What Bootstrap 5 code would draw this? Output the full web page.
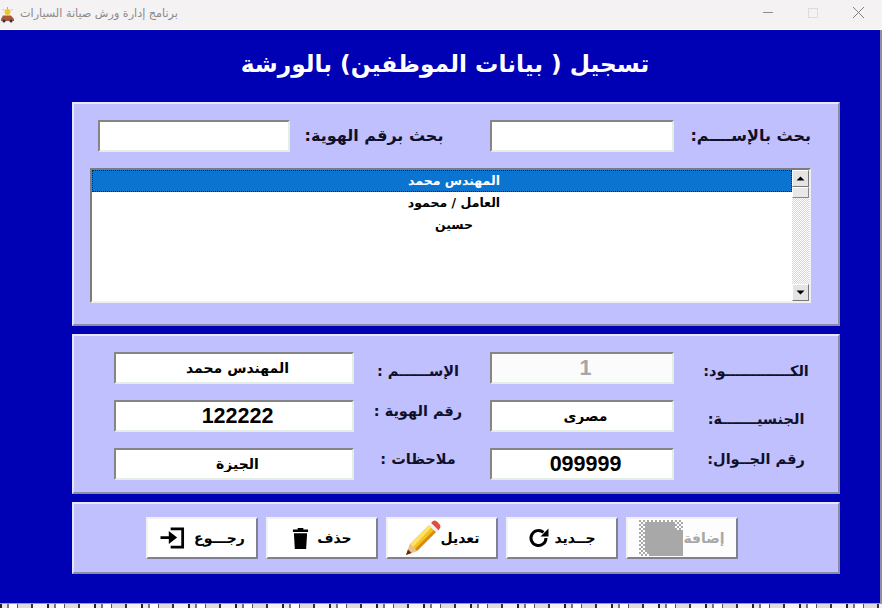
<!DOCTYPE html>
<html lang="ar" dir="rtl">
<head>
<meta charset="utf-8">
<title>برنامج إدارة ورش صيانة السيارات</title>
<link href="https://cdn.jsdelivr.net/npm/bootstrap@5.3.0/dist/css/bootstrap.min.css" rel="stylesheet">
<style>
html,body{margin:0;height:608px;overflow:hidden;background:#0000b4;font-family:"Liberation Sans","DejaVu Sans",sans-serif}
.appwin{height:608px;width:882px}
.tbar{height:30px;background:#f4f2f3;color:#8a8a8a;font-size:12px;border-bottom:1px solid #fff;direction:ltr}
.tbar-name{direction:rtl;margin-left:5px;font-family:"DejaVu Sans",sans-serif;font-size:11.2px}
.stage{background:#0000b4;padding:0 40px 0 72px;border-right:2px solid #8f8fa8}
.hdr{height:72px;margin:0;padding:0 22px 4px 0;color:#fff;font-weight:700;font-size:23.300px;font-family:"DejaVu Sans",sans-serif}
.pnl{background:#c0c0ff;border:2px solid;border-color:#e6e6f4 #8c8ca8 #8c8ca8 #e6e6f4}
.pnl-a{height:224px;padding:16px 27px 0 16px}
.pnl-b{height:160px;padding-top:16px}
.pnl-c{height:72px;padding-right:28px}
.srow{display:grid;grid-template-columns:137px 184px 200px 192px;height:32px;margin-bottom:16px}
.dgrid{display:grid;grid-template-columns:164px 184px 136px 240px;grid-auto-rows:32px;row-gap:16px}
.cap{font-family:"DejaVu Sans",sans-serif;font-weight:700;font-size:14.500px;color:#10102a;text-align:center;white-space:nowrap}
.cap-big{font-size:16px}
.cap-flush{text-align:right}
.cap-inset{padding-right:32px}
.cap-mid{padding-right:8px}
.fld.form-control{height:32px;min-height:0;padding:0 0 0 7px;border-radius:0;border:2px solid;border-color:#858585 #e4eee4 #e4eee4 #858585;background:#fff;text-align:center;font-family:"DejaVu Sans",sans-serif;font-weight:700;font-size:14px;color:#000;box-shadow:none}
.fld.num{font-family:"Liberation Sans",sans-serif;font-size:21.500px}
.fld.off{color:#a6a6a6;background:#fbfbfb}
.lbox{height:135px;direction:ltr;border:2px solid;border-color:#7c7c7c #f0f0f0 #f0f0f0 #7c7c7c;background:#fff}
.lbox .list-group{flex:1;border-radius:0;--bs-list-group-border-width:0}
.lbox .list-group-item{height:22px;padding:0 0 0 24px;direction:rtl;text-align:center;font-family:"DejaVu Sans",sans-serif;font-weight:700;font-size:12.500px;line-height:22px;color:#000;background:transparent}
.lbox .list-group-item.active{background:#0a74d0;color:#fff;outline:1px dotted #222;outline-offset:-1px}
.sbar{width:17px;background:repeating-conic-gradient(#d6d6d6 0 25%,#fff 0 50%) 0 0/2px 2px}
.sbtn{height:17px;background:#e4e4e4;border:1px solid;border-color:#fff #777 #777 #fff}
.sbtn svg{display:block}
.sthumb{height:11px;background:#e8e8e8;border:1px solid;border-color:#fff #888 #888 #fff}
.acts{direction:ltr}
.cmd.btn{width:112px;height:42px;padding:0;border-radius:0;background:#fff;color:#000;border:2px solid;border-color:#f2f2f2 #808090 #808090 #f2f2f2;font-family:"DejaVu Sans",sans-serif;font-weight:700;font-size:14px;opacity:1}
.cmd span{direction:rtl}
.cmd.dim{background:#fdfdfd;color:#a8a8a8}
.foot{height:5px;margin:auto -42px 0 -72px;background:repeating-linear-gradient(90deg,#222 0 2px,#e8e8e8 2px 7px,#777 7px 9px,#fff 9px 17px,#555 17px 18px,#ddd 18px 31px,#333 31px 33px,#f2f2f2 33px 47px);border-top:1px solid #9a9ab0}
</style>
</head>
<body>
<div class="appwin d-flex flex-column">
  <div class="tbar d-flex align-items-center flex-shrink-0">
    <svg width="15" height="16" viewBox="0 0 15 16" class="flex-shrink-0">
      <circle cx="7.500" cy="5" r="3" fill="#f2c230"/>
      <path d="M7.500 0v2M2.500 2l1.500 1.500M12.500 2L11 3.500" stroke="#e8a820" stroke-width="1"/>
      <path d="M1 12l2-3.500h8l3 3.500v2H1z" fill="#a8583c"/>
      <circle cx="4" cy="14" r="1.500" fill="#333"/><circle cx="11" cy="14" r="1.500" fill="#333"/>
    </svg>
    <span class="tbar-name">برنامج إدارة ورش صيانة السيارات</span>
    <svg width="130" height="30" viewBox="0 0 130 30" class="ms-auto flex-shrink-0">
      <path d="M11 12.500h10" stroke="#8c8c8c" fill="none"/>
      <rect x="56.500" y="8.500" width="9" height="9" fill="none" stroke="#dcdcdc"/>
      <path d="M101 7l11 11M112 7l-11 11" stroke="#808080" fill="none"/>
    </svg>
  </div>
  <div class="stage flex-grow-1 d-flex flex-column">
    <h1 class="hdr d-flex align-items-center justify-content-center">تسجيل ( بيانات الموظفين) بالورشة</h1>
    <div class="d-flex flex-column gap-2">
      <section class="pnl pnl-a">
        <div class="srow">
          <label class="cap cap-big cap-flush align-self-center">بحث بالإســــم:</label>
          <input class="fld form-control" type="text" aria-label="بحث بالإسم">
          <label class="cap cap-big cap-inset align-self-center">بحث برقم الهوية:</label>
          <input class="fld form-control" type="text" aria-label="بحث برقم الهوية">
        </div>
        <div class="lbox d-flex">
          <div class="list-group">
            <div class="list-group-item active">المهندس محمد</div>
            <div class="list-group-item">العامل / محمود</div>
            <div class="list-group-item">حسين</div>
          </div>
          <div class="sbar d-flex flex-column">
            <div class="sbtn"><svg width="15" height="15" viewBox="0 0 15 15"><path d="M3.500 9.500h8l-4-4z" fill="#000"/></svg></div>
            <div class="sthumb"></div>
            <div class="sbtn mt-auto"><svg width="15" height="15" viewBox="0 0 15 15"><path d="M3.500 5.500h8l-4 4z" fill="#000"/></svg></div>
          </div>
        </div>
      </section>
      <section class="pnl pnl-b">
        <div class="dgrid">
          <label class="cap align-self-center mt-2">الكـــــــــــــود:</label>
          <input class="fld form-control num off" type="text" value="1" readonly>
          <label class="cap cap-mid align-self-center mt-2">الإســــــم :</label>
          <input class="fld form-control" type="text" value="المهندس محمد" readonly>
          <label class="cap align-self-center mt-2">الجنسيـــــــة:</label>
          <input class="fld form-control" type="text" value="مصري" readonly>
          <label class="cap cap-mid align-self-center mb-2">رقم الهوية :</label>
          <input class="fld form-control num" type="text" value="122222" readonly>
          <label class="cap align-self-center mb-2">رقم الجــوال:</label>
          <input class="fld form-control num" type="text" value="099999" readonly>
          <label class="cap cap-mid align-self-center mb-2">ملاحظات :</label>
          <input class="fld form-control" type="text" value="الجيزة" readonly>
        </div>
      </section>
      <section class="pnl pnl-c acts d-flex align-items-center justify-content-center gap-2">
        <button class="cmd btn d-flex align-items-center justify-content-center gap-2" type="button">
          <svg width="27" height="24" viewBox="0 0 28 26"><path d="M12 3h13v20H12" fill="none" stroke="#000" stroke-width="3"/><path d="M1 11h9V5.500l9 7-9 7V14H1z" fill="#000"/></svg>
          <span>رجـــوع</span>
        </button>
        <button class="cmd btn d-flex align-items-center justify-content-center gap-2" type="button">
          <svg width="17" height="23" viewBox="0 0 18 24"><path d="M6 2.500V1h6v1.500h5V5H1V2.500z" fill="#000"/><path d="M2 6.500h14l-1 16.500H3z" fill="#000"/></svg>
          <span>حذف</span>
        </button>
        <button class="cmd btn d-flex align-items-center justify-content-center" type="button">
          <svg width="36" height="36" viewBox="0 0 36 36">
            <path d="M1 35l4-11L24 5l7 7-19 19z" fill="#f5c21c"/>
            <path d="M5 24L24 5l2.500 2.500L8 27z" fill="#ffe06a"/>
            <path d="M12 31L31 12l-2-2L10 29z" fill="#d98a10"/>
            <path d="M1 35l4-11 7 7z" fill="#e8c090"/><path d="M1 35l2-5.500 3.500 3.500z" fill="#5a2a10"/>
            <path d="M26 3l2-2c1.500-1 3-.5 4.500 1s3 3 3 5l-2 3.500z" fill="#e0503c"/>
            <path d="M24 5l2-2 8 8-2.500 1.500z" fill="#f2f2f2"/>
          </svg>
          <span>تعديل</span>
        </button>
        <button class="cmd btn d-flex align-items-center justify-content-center gap-1" type="button">
          <svg width="22" height="22" viewBox="0 0 22 22"><path d="M18 11a7.500 7.500 0 1 1-2.500-5.600" fill="none" stroke="#000" stroke-width="3"/><path d="M20.500 1.500v8h-8z" fill="#000"/></svg>
          <span>جــديد</span>
        </button>
        <button class="cmd dim btn d-flex align-items-center justify-content-center" type="button" disabled>
          <svg width="44" height="36" viewBox="0 0 44 36">
            <defs><pattern id="dth" width="4" height="4" patternUnits="userSpaceOnUse"><rect width="2" height="2" fill="#a8a8a8"/><rect x="2" y="2" width="2" height="2" fill="#a8a8a8"/></pattern></defs>
            <rect width="44" height="36" fill="url(#dth)"/>
            <path d="M6 2h30v8h8v26H10v-4H6z" fill="#a8a8a8"/>
          </svg>
          <span>إضافة</span>
        </button>
      </section>
    </div>
    <div class="foot"></div>
  </div>
</div>
</body>
</html>
